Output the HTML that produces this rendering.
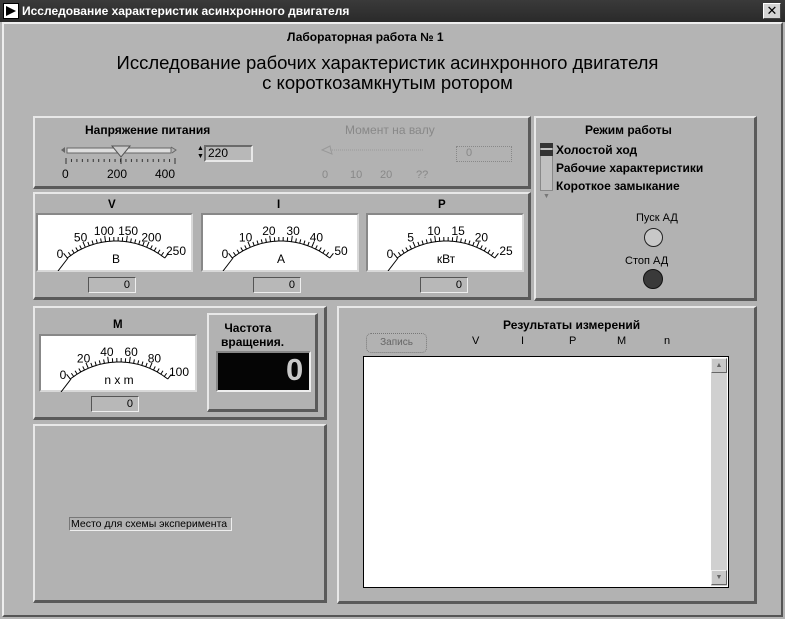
<!DOCTYPE html>
<html><head><meta charset="utf-8">
<style>
*{margin:0;padding:0;box-sizing:border-box}
body{width:785px;height:619px;background:#b4b4b4;font-family:"Liberation Sans","DejaVu Sans",sans-serif;position:relative;overflow:hidden;color:#000}
.a{position:absolute}
.raised{position:absolute;border-top:2px solid #e8e8e8;border-left:2px solid #e8e8e8;border-right:3px solid #5a5a5a;border-bottom:3px solid #5a5a5a;background:#b2b2b2}
.sunk{position:absolute;border-top:2px solid #6a6a6a;border-left:2px solid #6a6a6a;border-right:2px solid #e8e8e8;border-bottom:2px solid #e8e8e8}
.b{font-weight:bold;font-size:11.5px;white-space:nowrap}
.dig{position:absolute;height:16px;border:1px solid #555;border-right-color:#eee;border-bottom-color:#eee;background:#b8b8b8;font-size:11px;text-align:right;padding-right:5px;line-height:14px}
.meter{position:absolute;background:#fff;border:2px solid #d8d8d8;border-top-color:#888;border-left-color:#888}
.meter svg{position:absolute;left:0;top:0}
.meter text{font-family:"Liberation Sans",sans-serif;font-size:12px}
</style></head><body>
<!-- title bar -->
<div class="a" style="left:0;top:0;width:785px;height:22px;background:linear-gradient(#3a3a3a,#2a2a2a)"></div>
<div class="a" style="left:3px;top:3px;width:16px;height:16px;background:#fff;border:1px solid #000"><svg width="14" height="14"><path d="M2 2 L12 7 L2 12 Z" fill="#000"/></svg></div>
<div class="a" style="left:22px;top:4px;color:#fff;font-size:12px;font-weight:bold;white-space:nowrap">Исследование характеристик асинхронного двигателя</div>
<div class="a" style="left:763px;top:3px;width:18px;height:16px;background:#d4d4d4;border:1px solid #fff;border-right-color:#444;border-bottom-color:#444;text-align:center;font-size:13px;font-weight:bold;line-height:13px">✕</div>
<div class="a" style="left:2px;top:22px;width:781px;height:595px;border:2px solid #eee;border-right-color:#555;border-bottom-color:#555"></div>

<div class="a b" style="left:287px;top:30px;font-size:12px">Лабораторная работа № 1</div>
<div class="a" style="left:0;width:785px;top:53px;text-align:center;font-size:18.5px;line-height:20px;padding-right:10px">Исследование рабочих характеристик асинхронного двигателя<br>с короткозамкнутым ротором</div>

<!-- panel 1 -->
<div class="raised" style="left:33px;top:116px;width:498px;height:73px"></div>
<div class="a b" style="left:85px;top:123px;font-size:12px">Напряжение питания</div>
<svg class="a" style="left:55px;top:142px" width="130" height="40">
<path d="M6 8 L10 5 L10 11Z" fill="#666"/>
<rect x="12" y="6" width="104" height="5" fill="#ddd" stroke="#666"/>
<path d="M116 5 L121 8 L117 11" fill="none" stroke="#666"/>
<path d="M57 4 L75 4 L66 15Z" fill="#ccc" stroke="#555"/>
<g stroke="#333"><path d="M11 16v6 M66 16v6 M120 16v6"/></g>
<g id="tk1" stroke="#333"></g>
<text x="7" y="36" font-size="12" font-family="Liberation Sans">0</text>
<text x="52" y="36" font-size="12" font-family="Liberation Sans">200</text>
<text x="100" y="36" font-size="12" font-family="Liberation Sans">400</text>
</svg>
<div class="a" style="left:197px;top:145px;width:6px;height:16px;font-size:7px;line-height:8px">▲<br>▼</div>
<div class="sunk" style="left:204px;top:145px;width:49px;height:17px;font-size:12px;padding-left:2px;line-height:13px;background:#b8b8b8">220</div>
<div class="a" style="left:345px;top:123px;color:#888;font-size:12px">Момент на валу</div>
<svg class="a" style="left:318px;top:142px" width="120" height="40">
<path d="M4 8 L12 4 L14 12Z" fill="none" stroke="#999"/>
<line x1="12" y1="8" x2="105" y2="8" stroke="#999" stroke-dasharray="1 1"/>
<g fill="#888" font-size="11" font-family="Liberation Sans"><text x="4" y="36">0</text><text x="32" y="36">10</text><text x="62" y="36">20</text><text x="98" y="36">??</text></g>
</svg>
<div class="a" style="left:456px;top:146px;width:56px;height:16px;border:1px dotted #888;font-size:11px;color:#888;padding-left:9px">0</div>

<!-- meters panel -->
<div class="raised" style="left:33px;top:192px;width:498px;height:108px"></div>
<div class="a b" style="left:108px;top:199px">V</div>
<div class="a b" style="left:277px;top:199px">I</div>
<div class="a b" style="left:438px;top:199px">P</div>
<div class="meter" id="m1" style="left:36px;top:213px;width:157px;height:59px"></div>
<div class="meter" id="m2" style="left:201px;top:213px;width:158px;height:59px"></div>
<div class="meter" id="m3" style="left:366px;top:213px;width:158px;height:59px"></div>
<div class="dig" style="left:88px;top:277px;width:48px">0</div>
<div class="dig" style="left:253px;top:277px;width:48px">0</div>
<div class="dig" style="left:420px;top:277px;width:48px">0</div>

<!-- mode panel -->
<div class="raised" style="left:534px;top:116px;width:223px;height:185px"></div>
<div class="a b" style="left:585px;top:123px;font-size:12px">Режим работы</div>
<div class="a" style="left:540px;top:143px;width:13px;height:48px;border:1px solid #888;background:#c0c0c0"></div>
<div class="a" style="left:540px;top:143px;width:13px;height:5px;background:#333"></div>
<div class="a" style="left:540px;top:150px;width:13px;height:6px;background:#333"></div>
<div class="a" style="left:543px;top:193px;font-size:7px;color:#777">▼</div>
<div class="a b" style="left:556px;top:143px;font-size:12px">Холостой ход</div>
<div class="a b" style="left:556px;top:161px;font-size:12px">Рабочие характеристики</div>
<div class="a b" style="left:556px;top:179px;font-size:12px">Короткое замыкание</div>
<div class="a" style="left:636px;top:212px;font-size:11px">Пуск АД</div>
<div class="a" style="left:644px;top:228px;width:19px;height:19px;border-radius:50%;background:#c8c8c8;border:1px solid #222"></div>
<div class="a" style="left:625px;top:255px;font-size:11px">Стоп АД</div>
<div class="a" style="left:643px;top:269px;width:20px;height:20px;border-radius:50%;background:#3a3a3a;border:1px solid #111"></div>

<!-- M panel -->
<div class="raised" style="left:33px;top:306px;width:294px;height:114px"></div>
<div class="a b" style="left:113px;top:319px">M</div>
<div class="meter" id="m4" style="left:39px;top:334px;width:158px;height:58px"></div>
<div class="dig" style="left:91px;top:396px;width:48px">0</div>
<div class="raised" style="left:207px;top:313px;width:111px;height:99px"></div>
<div class="a b" style="left:221px;top:321px;font-size:12px;line-height:14px">&nbsp;Частота<br>вращения.</div>
<div class="a" style="left:216px;top:351px;width:95px;height:41px;background:#050505;border:2px solid #888;border-right-color:#eee;border-bottom-color:#eee"></div>
<div class="a" style="left:286px;top:352px;color:#c8c8c8;font-size:31px;font-weight:bold">0</div>

<!-- schema panel -->
<div class="raised" style="left:33px;top:424px;width:294px;height:179px"></div>
<div class="a" style="left:69px;top:517px;width:163px;height:14px;border:1px solid #777;border-right-color:#eee;border-bottom-color:#eee;font-size:10.5px;line-height:12px;padding-left:1px;white-space:nowrap;overflow:hidden">Место для схемы эксперимента</div>

<!-- results panel -->
<div class="raised" style="left:337px;top:306px;width:420px;height:298px"></div>
<div class="a b" style="left:503px;top:318px;font-size:12px">Результаты измерений</div>
<div class="a" style="left:366px;top:333px;width:61px;height:20px;border:1px dotted #777;border-radius:5px;font-size:10px;color:#666;text-align:center;line-height:18px">Запись</div>
<div class="a" style="left:472px;top:335px;font-size:11px">V</div>
<div class="a" style="left:521px;top:335px;font-size:11px">I</div>
<div class="a" style="left:569px;top:335px;font-size:11px">P</div>
<div class="a" style="left:617px;top:335px;font-size:11px">M</div>
<div class="a" style="left:664px;top:335px;font-size:11px">n</div>
<div class="a" style="left:363px;top:356px;width:366px;height:232px;background:#fff;border:1px solid #000"></div>
<div class="a" style="left:711px;top:358px;width:16px;height:228px;background:#d0d0d0"></div>
<div class="a" style="left:711px;top:358px;width:16px;height:15px;background:#c8c8c8;border:1px solid #eee;border-right-color:#666;border-bottom-color:#666;font-size:7px;text-align:center;color:#666;line-height:13px">▲</div>
<div class="a" style="left:711px;top:570px;width:16px;height:15px;background:#c8c8c8;border:1px solid #eee;border-right-color:#666;border-bottom-color:#666;font-size:7px;text-align:center;color:#666;line-height:13px">▼</div>

<script>
var t=document.getElementById('tk1'),s='';
for(var i=0;i<=20;i++){var x=11+i*5.45;s+='<line x1="'+x+'" y1="17" x2="'+x+'" y2="20"/>';}
t.innerHTML=s;
function meter(id,labels,unit){
 var el=document.getElementById(id),W=154,cx=78,cy=104,R=78,a0=-38.6,a1=38.6;
 var s='<svg width="'+W+'" height="56"><path d="M20 56 L30 43" stroke="#000"/>';
 var p=function(a,r){var rad=a*Math.PI/180;return [cx+r*Math.sin(rad),cy-r*Math.cos(rad)];};
 s+='<path d="';
 for(var k=0;k<=40;k++){var q=p(a0+(a1-a0)*k/40,R);s+=(k?'L':'M')+q[0].toFixed(1)+' '+q[1].toFixed(1);}
 s+='" fill="none" stroke="#000"/>';
 for(var k=0;k<=25;k++){var a=a0+(a1-a0)*k/25,l=(k%5==0)?6:4,q1=p(a,R),q2=p(a,R+l);
  s+='<line x1="'+q1[0]+'" y1="'+q1[1]+'" x2="'+q2[0]+'" y2="'+q2[1]+'" stroke="#000"/>';}
 for(var j=0;j<labels.length;j++){var a=a0+(a1-a0)*j/(labels.length-1),q=p(a,R+12);
  var x=q[0],y=q[1]+5; if(j==0){x=22;y=43;} if(j==labels.length-1){x=W-16;y=40;}
  s+='<text x="'+x+'" y="'+y+'" text-anchor="middle">'+labels[j]+'</text>';}
 s+='<text x="'+cx+'" y="48" text-anchor="middle">'+unit+'</text></svg>';
 el.innerHTML=s;
}
meter('m1',['0','50','100','150','200','250'],'В');
meter('m2',['0','10','20','30','40','50'],'А');
meter('m3',['0','5','10','15','20','25'],'кВт');
meter('m4',['0','20','40','60','80','100'],'n x m');
</script>
</body></html>
